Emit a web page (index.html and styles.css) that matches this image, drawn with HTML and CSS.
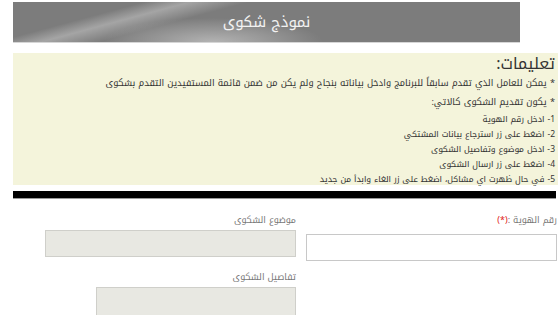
FILE: index.html
```html
<!DOCTYPE html>
<html lang="ar">
<head>
<meta charset="utf-8">
<link rel="stylesheet" href="styles.css">
</head>
<body>
<div class="wrap">
  <div class="header"><span class="header-title">نموذج شكوى</span></div>
  <div class="info">
    <h2 class="info-title">تعليمات:</h2>
    <p class="info-line">* يمكن للعامل الذي تقدم سابقاً للبرنامج وادخل بياناته بنجاح ولم يكن من ضمن قائمة المستفيدين التقدم بشكوى</p>
    <p class="info-line">* يكون تقديم الشكوى كالاتي:</p>
    <ul class="steps">
      <li>1- ادخل رقم الهوية</li>
      <li>2- اضغط على زر استرجاع بيانات المشتكي</li>
      <li>3- ادخل موضوع وتفاصيل الشكوى</li>
      <li>4- اضغط على زر ارسال الشكوى</li>
      <li>5- في حال ظهرت اي مشاكل، اضغط على زر الغاء وابدأ من جديد</li>
    </ul>
  </div>
  <div class="divider"></div>
  <div class="form">
    <div class="col col-right">
      <label class="lbl">رقم الهوية :<span class="req">(*)</span></label>
      <div class="field field-white"></div>
    </div>
    <div class="col col-left">
      <label class="lbl">موضوع الشكوى</label>
      <div class="field field-gray"></div>
      <label class="lbl lbl-2">تفاصيل الشكوى</label>
      <div class="area"></div>
    </div>
  </div>
</div>
</body>
</html>
```
FILE: styles.css
```css
html, body {
  margin: 0;
  padding: 0;
  background: #fff;
  overflow: hidden;
  height: 315px;
}
body {
  font-family: "Noto Kufi Arabic", "DejaVu Sans", sans-serif;
  color: #333;
}
.wrap {
  margin-left: 13px;
  width: 545px;
  padding-top: 2px;
}
.header {
  width: 507px;
  height: 40px;
  border-bottom: 1px solid #d6d6d6;
  background:
    radial-gradient(ellipse 110px 24px at 200px 40px, rgba(185,185,185,0.9), rgba(185,185,185,0) 100%),
    linear-gradient(165deg, rgba(0,0,0,0) 0%, rgba(0,0,0,0) 20%, rgba(205,205,205,0.5) 27%, rgba(0,0,0,0) 36%),
    #7c7c7c;
  display: flex;
  align-items: center;
  justify-content: center;
  direction: rtl;
}
.header-title {
  color: #f2f2f2;
  font-size: 15px;
  line-height: 20px;
}
.info {
  margin-top: 10px;
  background: #f4f4db;
  direction: rtl;
  padding: 1px 3px 0 0;
  box-sizing: border-box;
  height: 132px;
}
.info-title {
  margin: 0;
  font-weight: normal;
  font-size: 16px;
  line-height: 20px;
  color: #333;
}
.info-line {
  margin: 0;
  font-size: 9.2px;
  line-height: 19px;
  color: #333;
}
.steps {
  list-style: none;
  margin: 0;
  padding: 0;
  font-size: 8.5px;
  line-height: 15px;
  color: #333;
}
.divider {
  margin-top: 6px;
  width: 543px;
  height: 7px;
  background: #000;
  border-bottom: 1px solid #999;
}
.form {
  direction: rtl;
  display: grid;
  grid-template-columns: 251px 251px;
  column-gap: 10px;
  padding-left: 32px;
  padding-right: 1px;
  margin-top: 13px;
}
.lbl {
  display: block;
  font-size: 9px;
  line-height: 16px;
  color: #777;
}
.req { color: #e02020; }
.col-right .lbl { margin-bottom: 6px; }
.field {
  height: 25px;
  border: 1px solid #c8c8c8;
}
.field-white { background: #fff; }
.field-gray { background: #e8e8e2; border-color: #cfcfca; }
.col-left .lbl:first-child { margin-bottom: 2px; }
.lbl-2 { margin-top: 12px; margin-bottom: 2px; }
.area {
  width: 198px;
  height: 60px;
  background: #e8e8e2;
  border: 1px solid #cfcfca;
}
```
